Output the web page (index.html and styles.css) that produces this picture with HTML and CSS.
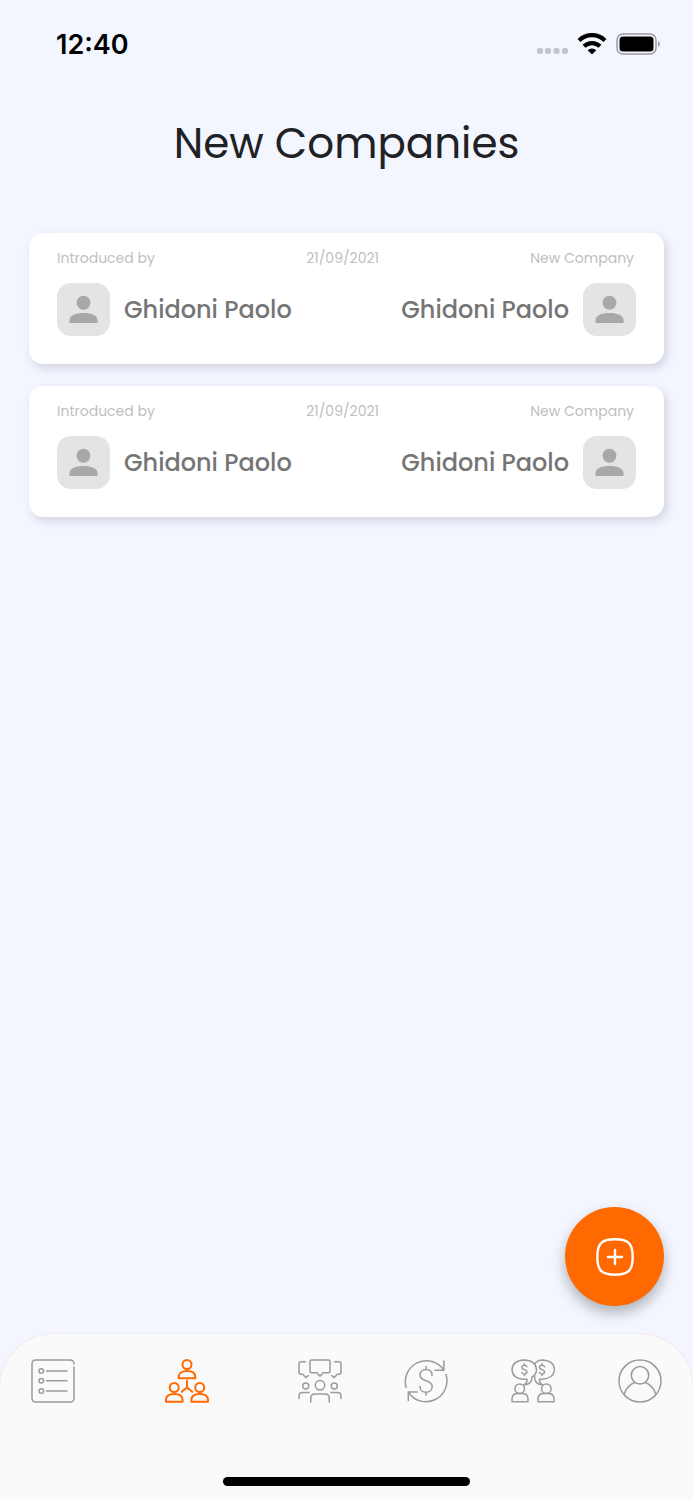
FILE: index.html
```html
<!DOCTYPE html>
<html lang="en">
<head>
  <meta charset="UTF-8" />
  <meta name="viewport" content="width=device-width, initial-scale=1.0" />
  <title>New Companies</title>
  <link rel="stylesheet" href="styles.css">
</head>
<body>
  <svg class="sprite" aria-hidden="true">
    <symbol id="person" viewBox="0 0 30 30">
      <circle cx="15" cy="8" r="7.2" />
      <path d="M.5 29v-3C.5 21 7 18.500 15 18.500S29.500 21 29.500 26v3z" />
    </symbol>
  </svg>

  <header class="status-bar">
    <span class="time">12:40</span>
    <div class="status-icons">
      <svg width="32" height="24" viewBox="0 0 32 24" fill="#c4c6ce">
        <rect x="1" y="16" width="6" height="6" rx="2" />
        <rect x="9" y="16" width="6" height="6" rx="2" />
        <rect x="17.500" y="16" width="6" height="6" rx="2" />
        <rect x="26" y="16" width="6" height="6" rx="2" />
      </svg>
      <svg width="30" height="24" viewBox="0 0 30 24" fill="none" stroke="#000" stroke-width="4.200">
        <path d="M2 8.500a18.500 18.500 0 0 1 26 0" />
        <path d="M7 14.300a11.500 11.500 0 0 1 16 0" />
        <path d="M15 22.500l-4.300-4.300a6 6 0 0 1 8.600 0z" fill="#000" stroke="none" />
      </svg>
      <svg width="46" height="24" viewBox="0 0 46 24">
        <rect x="1" y="2" width="39" height="20" rx="6" fill="none" stroke="#9a9ba1" stroke-width="1.500" />
        <rect x="3.500" y="4.500" width="34" height="15" rx="3.500" />
        <path d="M42 9q4 3 0 6z" fill="#9a9ba1" />
      </svg>
    </div>
  </header>

  <main>
    <h1>New Companies</h1>

    <section class="companies">
      <article class="card">
        <div class="labels">
          <span>Introduced by</span>
          <span>21/09/2021</span>
          <span>New Company</span>
        </div>
        <div class="people">
          <div class="person">
            <span class="avatar"><svg><use href="#person" /></svg></span>
            <span>Ghidoni Paolo</span>
          </div>
          <div class="person">
            <span>Ghidoni Paolo</span>
            <span class="avatar"><svg><use href="#person" /></svg></span>
          </div>
        </div>
      </article>

      <article class="card">
        <div class="labels">
          <span>Introduced by</span>
          <span>21/09/2021</span>
          <span>New Company</span>
        </div>
        <div class="people">
          <div class="person">
            <span class="avatar"><svg><use href="#person" /></svg></span>
            <span>Ghidoni Paolo</span>
          </div>
          <div class="person">
            <span>Ghidoni Paolo</span>
            <span class="avatar"><svg><use href="#person" /></svg></span>
          </div>
        </div>
      </article>
    </section>

    <button class="add" type="button" aria-label="Add company">
      <svg width="40" height="40" viewBox="0 0 40 40" fill="none" stroke="#fff" stroke-width="2.400" stroke-linecap="round">
        <path d="M20 2.300C33.500 2.300 37.700 6.500 37.700 20S33.500 37.700 20 37.700 2.300 33.500 2.300 20 6.500 2.300 20 2.300z" />
        <path d="M20 13v14M13 20h14" />
      </svg>
    </button>
  </main>

  <nav class="tab-bar">
    <div class="tabs">
      <a href="#list" aria-label="List">
        <svg viewBox="0 0 44 44">
          <path d="M43 8v31q0 4-4 4H5q-4 0-4-4V5q0-4 4-4h34q4 0 4 4" />
          <circle cx="10.300" cy="12" r="2.300" />
          <circle cx="10.300" cy="21.700" r="2.300" />
          <circle cx="10.300" cy="32" r="2.300" />
          <path d="M15.500 12H36M15.500 21.700H36M15.500 32H36" />
        </svg>
      </a>
      <a href="#companies" class="active" aria-label="Companies">
        <svg viewBox="0 0 44 44">
          <circle cx="22" cy="5.500" r="4.500" />
          <path d="M13.700 18v1.300h16.600V18c0-4-3.500-6-8.300-6s-8.300 2-8.300 6z" />
          <circle cx="9.200" cy="28.500" r="4.500" />
          <path d="M1 41v1.700h16.600V41c0-4-3.500-6-8.300-6S1 37 1 41z" />
          <circle cx="34.700" cy="28.500" r="4.500" />
          <path d="M26.400 41v1.700H43V41c0-4-3.500-6-8.300-6s-8.300 2-8.300 6z" />
          <path d="M22 22v6.500l-5.300 4.300M22 28.500l5.300 4.300" />
        </svg>
      </a>
      <a href="#meetings" aria-label="Meetings">
        <svg viewBox="0 0 44 44">
          <path d="M13.500 1h17q1.500 0 1.500 1.500v9.800q0 1.500-1.500 1.500H25l-3 3.500-3-3.500h-5.500q-1.500 0-1.500-1.500V2.500Q12 1 13.500 1z" />
          <path d="M7.500 2.700H3q-2 0-2 2v8.500q0 2 2 2h1.700L8 18.700l2.300-2.200M36.500 2.700H41q2 0 2 2v8.500q0 2-2 2h-1.700L36 18.700l-2.300-2.200" />
          <circle cx="22" cy="26.300" r="4.700" />
          <circle cx="7.700" cy="27" r="3" />
          <circle cx="36.300" cy="27" r="3" />
          <path d="M12.800 43v-4q0-4 4-4h10.400q4 0 4 4v4M1 39.500V37q0-3.500 3.500-3.500H11M43 39.500V37q0-3.500-3.500-3.500H33" />
        </svg>
      </a>
      <a href="#transactions" aria-label="Transactions">
        <svg viewBox="0 0 44 44">
          <path d="M2.100 28.500A21 21 0 0 1 39.900 11.300M39.900 2v9.300h-9M42 15.500A21 21 0 0 1 4.900 34M4.300 41.500V33h9" />
          <path d="M28 16.500c0-4-2.500-6-6-6s-6 2.200-6 5.500c0 7.500 12.200 4 12.200 11.500 0 3.500-2.700 5.800-6.200 5.800s-6-2.300-6-6M22 7.500v3M22 33.300v3" />
        </svg>
      </a>
      <a href="#deals" aria-label="Deals">
        <svg viewBox="0 0 44 44">
          <path d="M28.500 20.300C28.300 23 29.500 25 31.500 25.700 26 25.700 23.500 22.500 23.500 17.500L22 9Q24 1 31.300 1q12 .500 12.200 9.700-.500 8.500-12.200 9.600z" />
          <path class="bubble" d="M16 20.300C16.200 23 15 25 13 25.700 18.500 25.700 21 22.500 21 18q4.500-2.500 4.500-7.300Q25 1.500 13.200 1 1.500 1.500 1 10.700q.500 9 12.200 9.600z" />
          <path d="M16 7.800q-.700-1.500-2.600-1.500t-2.600 1.800q0 1.800 2.600 2.500t2.600 2.700q-.500 1.700-2.600 1.700t-2.600-1.600M13.400 4.800v1.500M13.400 15v1.500M33.600 7.800q-.700-1.500-2.600-1.500t-2.600 1.800q0 1.800 2.600 2.500t2.600 2.700q-.500 1.700-2.600 1.700t-2.600-1.600M31 4.800v1.500M31 15v1.500" />
          <circle cx="8.700" cy="29.700" r="4.800" />
          <circle cx="35.300" cy="29.700" r="4.800" />
          <path d="M1 42.700V40q0-5 5-5.500h6q5 .500 5 5.500v2.700zM27 42.700V40q0-5 5-5.500h6q5 .500 5 5.500v2.700z" />
        </svg>
      </a>
      <a href="#profile" aria-label="Profile">
        <svg viewBox="0 0 44 44">
          <circle cx="22" cy="22" r="21" />
          <circle cx="22" cy="16.300" r="8.700" />
          <path d="M6.200 35.500Q9 26 17 23.500M37.800 35.500Q35 26 27 23.500" />
        </svg>
      </a>
    </div>
    <div class="home-indicator"></div>
  </nav>
</body>
</html>
```
FILE: styles.css
```css
* {
  box-sizing: border-box;
}

body {
  margin: 0;
  min-height: 100vh;
  display: flex;
  flex-direction: column;
  font-family: Poppins, Inter, sans-serif;
  background: #f3f6ff;
}

.sprite {
  display: none;
}

.status-bar {
  display: flex;
  justify-content: space-between;
  align-items: center;
  height: 88px;
  padding: 0 31px 0 56px;
}

.time {
  font-family: Inter, sans-serif;
  font-size: 27px;
  font-weight: 600;
}

.status-icons {
  display: flex;
  gap: 9px;
}

main {
  position: relative;
  flex: 1;
  padding: 0 29px;
}

h1 {
  margin: 25px 0 58px;
  font-size: 42px;
  line-height: 62px;
  font-weight: 400;
  text-align: center;
  color: #202124;
}

.companies {
  display: flex;
  flex-direction: column;
  gap: 22px;
}

.card {
  padding: 14px 28px 28px;
  background: #fff;
  border-radius: 14px;
  box-shadow: 3px 4px 10px rgba(40, 40, 70, 0.16);
}

.labels {
  display: flex;
  justify-content: space-between;
  margin-bottom: 14px;
  padding-right: 2px;
  font-size: 14px;
  line-height: 22px;
  color: #c0c0c0;
}

.people,
.person {
  display: flex;
  align-items: center;
  justify-content: space-between;
}

.person {
  gap: 14px;
  font-size: 24px;
  font-weight: 500;
  color: #757575;
}

.avatar {
  display: flex;
  align-items: center;
  justify-content: center;
  width: 53px;
  height: 53px;
  border-radius: 14px;
  background: #e4e4e4;
}

.avatar svg {
  width: 29px;
  height: 29px;
  fill: #a8a8a8;
}

.add {
  position: absolute;
  right: 29px;
  bottom: 28px;
  display: flex;
  align-items: center;
  justify-content: center;
  width: 99px;
  height: 99px;
  padding: 0;
  border: none;
  border-radius: 50%;
  background: #ff6900;
  box-shadow: 0 7px 14px rgba(0, 0, 0, 0.28);
}

.tab-bar {
  display: flex;
  flex-direction: column;
  justify-content: space-between;
  height: 166px;
  padding: 25px 0 14px;
  border-radius: 53px 53px 0 0;
  background: #fafafa;
  box-shadow: 0 0 1px rgba(255, 90, 90, 0.4);
}

.tabs {
  display: flex;
}

.tabs a {
  flex: 2;
  display: flex;
  justify-content: center;
  color: #9b9b9b;
}

.tabs a.active {
  flex: 3;
  color: #ff6900;
}

.tabs svg {
  width: 44px;
  height: 44px;
  fill: none;
  stroke: currentColor;
  stroke-width: 1.5;
  stroke-linecap: round;
  stroke-linejoin: round;
}

.tabs .active svg {
  stroke-width: 2;
}

.tabs .bubble {
  fill: #fafafa;
}

.home-indicator {
  align-self: center;
  width: 247px;
  height: 9px;
  border-radius: 5px;
  background: #000;
}
```
